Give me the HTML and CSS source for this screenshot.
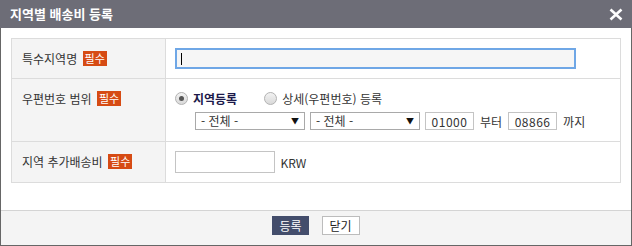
FILE: index.html
```html
<!DOCTYPE html>
<html lang="ko">
<head>
  <meta charset="UTF-8">
  <meta name="viewport" content="width=device-width, initial-scale=1.0">
  <title>지역별 배송비 등록</title>
  <link rel="stylesheet" href="styles.css">
</head>
<body>
  <div class="dialog">
    <div class="dialog-head">
      <h1>지역별 배송비 등록</h1>
      <button class="close" type="button" aria-label="닫기">
        <svg width="14" height="13" viewBox="0 0 14 13">
          <path d="M1.5 1.5 L12.5 11.5 M12.5 1.5 L1.5 11.5" stroke="#fff" stroke-width="2.6" fill="none"/>
        </svg>
      </button>
    </div>

    <div class="dialog-body">
      <table class="form-table">
        <tr class="row-name">
          <th>특수지역명 <span class="req">필수</span></th>
          <td>
            <span class="focus-wrap">
              <input type="text" class="input-wide">
              <span class="caret"></span>
            </span>
          </td>
        </tr>
        <tr class="row-zip">
          <th>우편번호 범위 <span class="req">필수</span></th>
          <td>
            <div class="radios">
              <label class="radio checked"><span class="dot"></span><b>지역등록</b></label>
              <label class="radio"><span class="dot"></span>상세(우편번호) 등록</label>
            </div>
            <div class="zip-line">
              <span class="select"><select><option>- 전체 -</option></select></span>
              <span class="select"><select><option>- 전체 -</option></select></span>
              <input type="text" class="input-zip" value="01000">
              <span>부터</span>
              <input type="text" class="input-zip" value="08866">
              <span>까지</span>
            </div>
          </td>
        </tr>
        <tr class="row-fee">
          <th>지역 추가배송비 <span class="req">필수</span></th>
          <td>
            <input type="text" class="input-fee">
            <span class="unit">KRW</span>
          </td>
        </tr>
      </table>
    </div>

    <div class="dialog-foot">
      <button type="button" class="btn btn-primary">등록</button>
      <button type="button" class="btn">닫기</button>
    </div>
  </div>
</body>
</html>
```

FILE: styles.css
```css
* {
  box-sizing: border-box;
}
body {
  margin: 0;
  font-family: "Noto Sans CJK KR", "Noto Sans", sans-serif;
  font-size: 12px;
  color: #333;
  background: #fff;
}
.dialog {
  width: 632px;
  height: 246px;
  border: 1px solid #666;
  border-top: none;
  display: flex;
  flex-direction: column;
}
.dialog-head {
  height: 28px;
  margin: 0 -1px;
  background-color: #6d6d77;
  display: flex;
  align-items: center;
  justify-content: space-between;
  padding: 0 9px 0 10px;
}
.dialog-head h1 {
  margin: 0;
  color: #fff;
  font-size: 13px;
  font-weight: bold;
  line-height: 28px;
}
.close {
  background: none;
  border: none;
  padding: 0;
  width: 14px;
  height: 13px;
  display: flex;
  cursor: pointer;
}
.dialog-body {
  height: 182px;
  padding: 10px 10px 0 10px;
}
.form-table {
  width: 610px;
  border-collapse: collapse;
  border: 1px solid #dcdcdc;
}
.form-table th,
.form-table td {
  border: 1px solid #dcdcdc;
  vertical-align: top;
  text-align: left;
}
.form-table th {
  width: 154px;
  background-color: #f4f4f4;
  font-weight: normal;
  padding: 9px 10px 0 10px;
  line-height: 21px;
  white-space: nowrap;
}
.form-table td {
  padding: 9px 9px;
}
.row-name td {
  height: 39px;
}
.row-zip td {
  height: 63px;
  padding-top: 8px;
  padding-bottom: 0;
}
.row-fee td {
  height: 39px;
}
.req {
  display: inline-block;
  background-color: #d64b14;
  color: #fff;
  font-size: 11px;
  line-height: 15px;
  padding: 0 2px;
  margin-left: 2px;
  vertical-align: 1px;
}
input {
  font-family: inherit;
  font-size: 12px;
  color: #333;
  border: 1px solid #c4c4c4;
  background: #fff;
  margin: 0;
  outline: none;
}
.focus-wrap {
  position: relative;
  display: inline-block;
}
.input-wide {
  width: 401px;
  height: 21px;
  border: 2px solid #6fa7e6;
  background-color: #f6f6f6;
}
.caret {
  position: absolute;
  left: 6px;
  top: 5px;
  width: 1px;
  height: 12px;
  background: #000;
}
.radios {
  display: flex;
  gap: 27px;
  height: 23px;
  align-items: center;
}
.radio {
  display: flex;
  align-items: center;
  gap: 5px;
}
.radio b {
  color: #1c1a4a;
}
.dot {
  width: 13px;
  height: 13px;
  border-radius: 50%;
  border: 1px solid #b3b3b3;
  background: linear-gradient(#f2f2f2, #d9d9d9);
  display: flex;
  align-items: center;
  justify-content: center;
}
.radio.checked .dot::after {
  content: "";
  width: 5px;
  height: 5px;
  border-radius: 50%;
  background: #555;
}
.zip-line {
  display: flex;
  align-items: center;
  gap: 5px;
  padding-left: 20px;
  margin-top: 2px;
}
.zip-line span {
  margin: 0 1px;
}
.select {
  position: relative;
  display: inline-block;
}
.select select {
  appearance: none;
  -webkit-appearance: none;
  display: block;
  width: 110px;
  height: 18px;
  border: 1px solid #a9a9a9;
  border-radius: 0;
  background: #fff;
  font-family: inherit;
  font-size: 12px;
  color: #333;
  padding: 0 0 0 5px;
  line-height: 16px;
}
.select::after {
  content: "▼";
  position: absolute;
  right: 6px;
  top: 4px;
  font-size: 8px;
  line-height: 10px;
  color: #111;
  pointer-events: none;
}
.zip-line .select {
  margin: 0;
}
.input-zip {
  width: 49px;
  height: 18px;
  text-align: center;
  letter-spacing: 0.5px;
}
.input-fee {
  width: 100px;
  height: 22px;
}
.unit {
  margin-left: 2px;
}
.dialog-foot {
  flex: 1;
  border-top: 1px solid #d4d4d4;
  background-color: #f4f4f4;
  display: flex;
  justify-content: center;
  align-items: flex-start;
  gap: 13px;
  padding-top: 5px;
}
.btn {
  height: 19px;
  padding: 0 7px;
  font-family: inherit;
  font-size: 12px;
  line-height: 17px;
  border: 1px solid #bcbcbc;
  background: #fff;
  color: #222;
  cursor: pointer;
}
.btn-primary {
  background-color: #434d6b;
  border-color: #434d6b;
  color: #fff;
  padding: 0 6px;
}
```
